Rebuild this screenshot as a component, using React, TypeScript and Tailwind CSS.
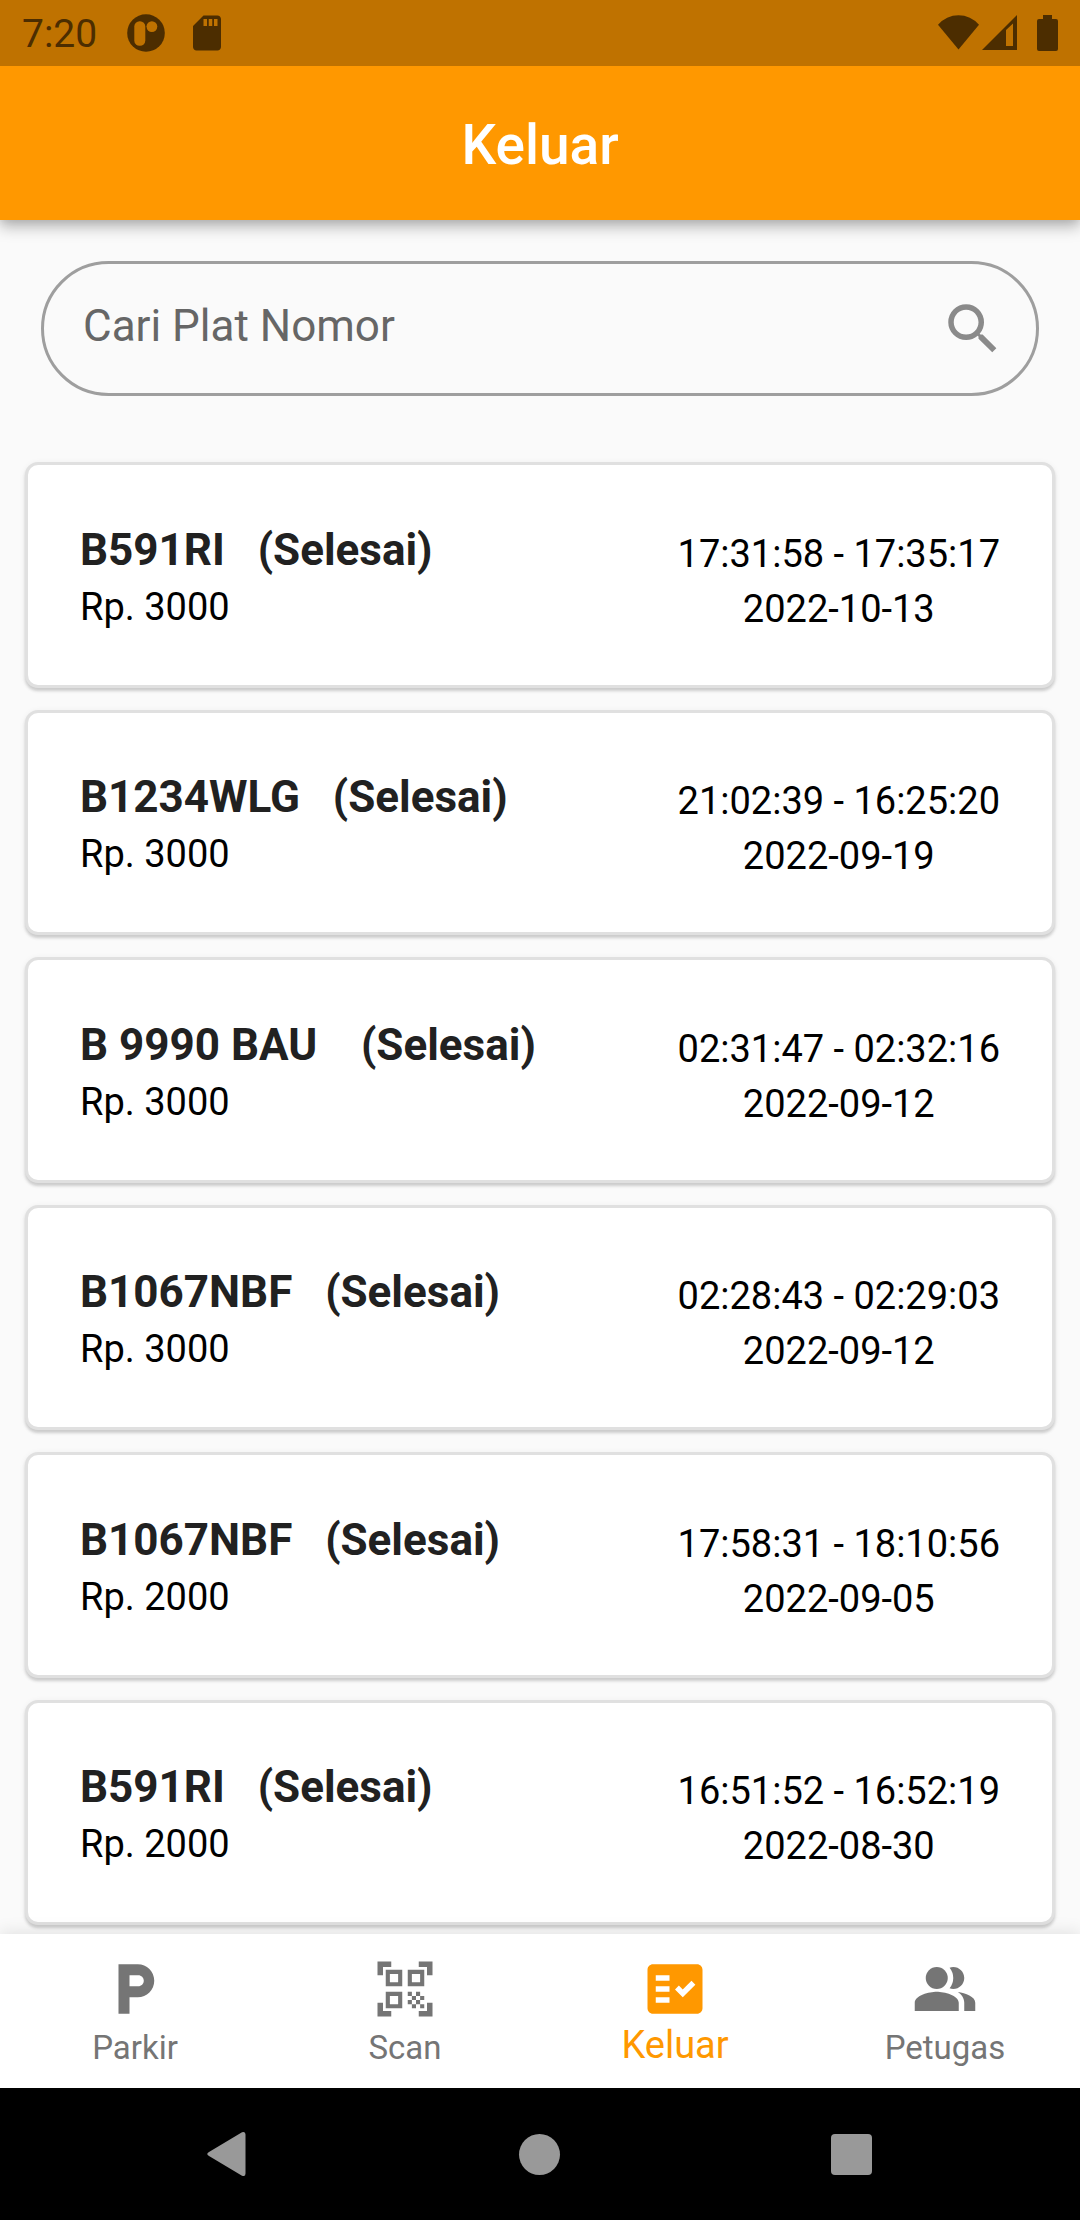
import type { ReactNode } from "react";
import {
  MdFactCheck,
  MdLocalParking,
  MdPeopleAlt,
  MdQrCodeScanner,
  MdSdCard,
  MdSearch,
} from "react-icons/md";

type Ticket = {
  plate: string;
  price: string;
  time: string;
  date: string;
};

const tickets: Ticket[] = [
  { plate: "B591RI", price: "Rp. 3000", time: "17:31:58 - 17:35:17", date: "2022-10-13" },
  { plate: "B1234WLG", price: "Rp. 3000", time: "21:02:39 - 16:25:20", date: "2022-09-19" },
  { plate: "B 9990 BAU ", price: "Rp. 3000", time: "02:31:47 - 02:32:16", date: "2022-09-12" },
  { plate: "B1067NBF", price: "Rp. 3000", time: "02:28:43 - 02:29:03", date: "2022-09-12" },
  { plate: "B1067NBF", price: "Rp. 2000", time: "17:58:31 - 18:10:56", date: "2022-09-05" },
  { plate: "B591RI", price: "Rp. 2000", time: "16:51:52 - 16:52:19", date: "2022-08-30" },
];

function StatusBar() {
  return (
    <div className="flex h-[66px] items-center justify-between bg-[#bf7200] px-[22px] text-[#4c2d00]">
      <div className="flex items-center">
        <span className="pt-0.5 text-[39px] leading-[44px]">7:20</span>
        <svg className="ml-[30px] size-[38px]" viewBox="0 0 38 38" aria-hidden="true">
          <circle cx="19" cy="19" r="18.8" fill="currentColor" />
          <rect x="7.3" y="7.3" width="11" height="24.5" rx="5.3" fill="#bf7200" />
          <circle cx="24.9" cy="12.6" r="5.4" fill="#bf7200" />
        </svg>
        <MdSdCard className="ml-[21px] size-[42px]" />
      </div>
      <div className="flex items-center">
        <svg className="h-9 w-[41px]" viewBox="0 0 41 36" aria-hidden="true">
          <path d="M20.5 34.5 0 9.8A27 27 0 0 1 41 9.8Z" fill="currentColor" />
        </svg>
        <svg className="ml-[3px] h-9 w-[35px]" viewBox="0 0 35 36" aria-hidden="true">
          <path
            d="M0 35H35V0ZM24 31V15L31 8.5V31Z"
            fill="currentColor"
            fillRule="evenodd"
          />
        </svg>
        <svg className="ml-5 h-9 w-[21px]" viewBox="0 0 21 36" aria-hidden="true">
          <path
            d="M6 0h9v4h4a2 2 0 0 1 2 2v28a2 2 0 0 1-2 2H2a2 2 0 0 1-2-2V6a2 2 0 0 1 2-2h4Z"
            fill="currentColor"
          />
        </svg>
      </div>
    </div>
  );
}

function SearchField() {
  return (
    <form
      role="search"
      onSubmit={(e) => e.preventDefault()}
      className="mx-4 flex h-[135px] items-center rounded-full border-3 border-[#9e9e9e] pr-[30px] pl-[39px]"
    >
      <input
        type="text"
        aria-label="Cari Plat Nomor"
        placeholder="Cari Plat Nomor"
        className="min-w-0 flex-1 bg-transparent pb-1.5 text-[44px] leading-[56px] text-black outline-none placeholder:text-[#666666] placeholder:opacity-100"
      />
      <button type="submit" aria-label="Cari" className="text-[#8a8a8a]">
        <MdSearch className="size-[66px]" />
      </button>
    </form>
  );
}

function TicketCard({ plate, price, time, date }: Ticket) {
  return (
    <li className="flex grow items-center justify-between rounded-[13px] border-3 border-[#e0e0e0] bg-white px-[52px] py-10 shadow-[0_3px_3px_rgba(0,0,0,0.16),0_1px_6px_rgba(0,0,0,0.06)]">
      <div className="pt-1.5">
        <h2 className="text-[44px] leading-[58px] font-bold whitespace-pre text-[#212121]">
          {`${plate}   (Selesai)`}
        </h2>
        <p className="text-[38px] leading-[56px]">{price}</p>
      </div>
      <div className="pt-3.5 text-center text-[38px] leading-[55px]">
        <p>{time}</p>
        <p>{date}</p>
      </div>
    </li>
  );
}

function NavItem({ icon, label, active }: { icon: ReactNode; label: string; active?: boolean }) {
  return (
    <button
      type="button"
      aria-current={active ? "page" : undefined}
      className={
        active
          ? "flex flex-col items-center text-[38px] leading-[46px] text-[#ff9800]"
          : "flex flex-col items-center text-[33px] leading-[52px] text-[#757575]"
      }
    >
      {icon}
      <span>{label}</span>
    </button>
  );
}

export default function App() {
  return (
    <div className="flex min-h-screen flex-col bg-[#fafafa] font-[Roboto,sans-serif] text-black">
      <header className="relative z-10 bg-[#ff9800] shadow-[0_7px_14px_rgba(0,0,0,0.27),0_2px_8px_rgba(0,0,0,0.08)]">
        <StatusBar />
        <div className="flex h-[154px] items-center justify-center pt-1">
          <h1 className="text-[55px] leading-[66px] font-medium text-white">Keluar</h1>
        </div>
      </header>

      <main className="flex grow flex-col px-[25px] pt-[41px] pb-[9px]">
        <SearchField />
        <ul className="mt-[66px] flex grow flex-col gap-[22px]">
          {tickets.map((ticket, i) => (
            <TicketCard key={i} {...ticket} />
          ))}
        </ul>
      </main>

      <nav
        aria-label="Menu"
        className="relative grid h-[154px] grid-cols-4 items-start bg-white pt-[22px] shadow-[0_-2px_16px_rgba(0,0,0,0.1)]"
      >
        <NavItem icon={<MdLocalParking className="size-[66px]" />} label="Parkir" />
        <NavItem icon={<MdQrCodeScanner className="size-[66px]" />} label="Scan" />
        <NavItem icon={<MdFactCheck className="size-[66px]" />} label="Keluar" active />
        <NavItem icon={<MdPeopleAlt className="size-[66px]" />} label="Petugas" />
      </nav>

      <div className="relative grid h-[132px] grid-cols-3 bg-black px-[73px] text-[#999999]">
        <button type="button" aria-label="Kembali" className="flex items-center justify-center">
          <svg className="size-[46px]" viewBox="0 0 46 46" aria-hidden="true">
            <path
              d="M3 21 36 1.3Q39.5 0 39.5 3.5V42.5Q39.5 46 36 44.7L3 25Q-.5 23 3 21Z"
              fill="currentColor"
            />
          </svg>
        </button>
        <button type="button" aria-label="Beranda" className="flex items-center justify-center">
          <span className="size-[41px] rounded-full bg-[#999999]" />
        </button>
        <button type="button" aria-label="Aplikasi terbaru" className="flex items-center justify-center">
          <span className="size-[41px] rounded bg-[#999999]" />
        </button>
      </div>
    </div>
  );
}
